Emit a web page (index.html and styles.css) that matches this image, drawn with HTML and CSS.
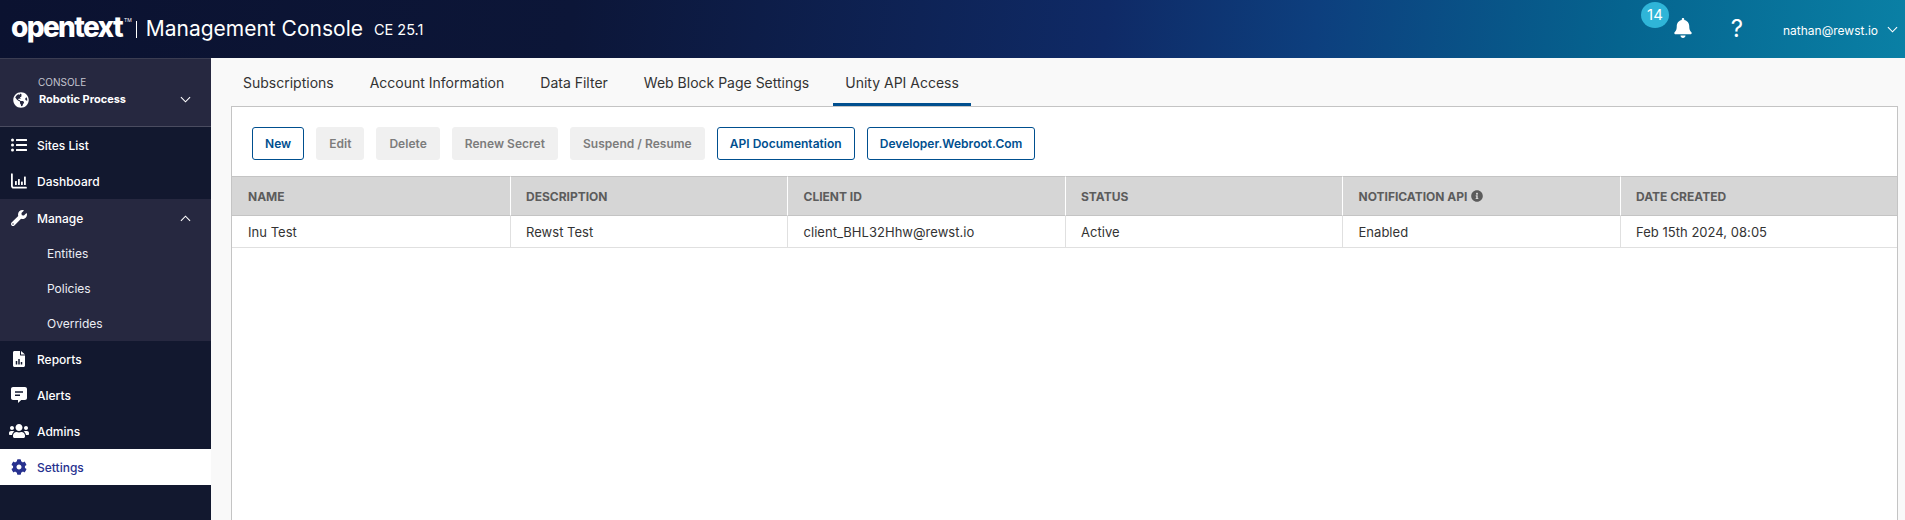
FILE: index.html
```html
<!DOCTYPE html>
<html lang="en">
<head>
  <meta charset="UTF-8" />
  <meta name="viewport" content="width=device-width, initial-scale=1.0"/>
  <title>Management Console</title>
  <link rel="stylesheet" href="styles.css">
</head>
<body>
  <header class="topbar">
    <div class="brand">
      <span class="logo">opentext<sup>TM</sup></span>
      <span class="brand-line"></span>
      <span class="product">Management Console</span>
      <span class="version">CE 25.1</span>
    </div>
    <div class="top-actions">
      <div class="bell">
        <span class="badge">14</span>
        <svg class="bell-icon" viewBox="0 0 448 512"><path d="M224 512c35.32 0 63.97-28.65 63.97-64H160.03c0 35.35 28.65 64 63.97 64zm215.39-149.71c-19.32-20.76-55.47-51.99-55.47-154.29 0-77.7-54.48-139.9-127.94-155.16V32c0-17.67-14.32-32-31.98-32s-31.98 14.33-31.98 32v20.84C118.56 68.1 64.08 130.3 64.08 208c0 102.3-36.15 133.53-55.47 154.29-6 6.45-8.66 14.16-8.61 21.71.11 16.4 12.98 32 32.1 32h383.8c19.12 0 32-15.6 32.1-32 .05-7.55-2.61-15.27-8.61-21.71z"/></svg>
      </div>
      <span class="help">?</span>
      <span class="user">nathan@rewst.io</span>
      <svg class="chev user-chev" viewBox="0 0 12 7"><path d="M1 1l5 5 5-5"/></svg>
    </div>
  </header>

  <div class="layout">
    <nav class="sidebar">
      <div class="console-box">
        <svg class="globe" viewBox="0 0 496 512"><path d="M248 8C111.03 8 0 119.03 0 256s111.03 248 248 248 248-111.03 248-248S384.97 8 248 8zm82.29 357.6c-3.9 3.88-7.99 7.95-11.31 11.28-2.99 3-5.1 6.7-6.17 10.71-1.51 5.66-2.73 11.38-4.77 16.87l-17.39 46.85c-13.76 3-28 4.69-42.65 4.69v-27.38c1.69-12.62-7.64-36.26-22.63-51.25-6-6-9.37-14.14-9.37-22.63v-32.01c0-11.64-6.27-22.34-16.46-27.97-14.37-7.95-34.81-19.06-48.81-26.11-11.48-5.78-22.1-13.14-31.65-21.75l-.8-.72a114.792 114.792 0 0 1-18.06-20.74c-9.38-13.77-24.66-36.42-34.59-51.14 20.47-45.5 57.36-82.04 103.2-101.89l24.01 12.01C203.48 89.74 216 82.01 216 70.11v-11.3c7.99-1.29 16.12-2.11 24.39-2.42l28.3 28.3c6.25 6.25 6.25 16.38 0 22.63L264 112l-10.34 10.34c-3.12 3.12-3.12 8.19 0 11.31l4.69 4.69c3.12 3.12 3.12 8.19 0 11.31l-8 8a8.008 8.008 0 0 1-5.66 2.34h-8.99c-2.08 0-4.08.81-5.58 2.27l-9.92 9.65a8.008 8.008 0 0 0-1.58 9.31l15.59 31.19c2.66 5.32-1.21 11.58-7.15 11.58h-5.64c-1.93 0-3.79-.7-5.24-1.96l-9.28-8.06a16.017 16.017 0 0 0-15.55-3.1l-31.17 10.39a11.95 11.95 0 0 0-8.17 11.34c0 4.53 2.56 8.66 6.61 10.69l11.08 5.54c9.41 4.71 19.79 7.16 30.31 7.16s22.59 27.29 32 32h66.75c8.49 0 16.62 3.37 22.63 9.37l13.69 13.69a30.503 30.503 0 0 1 8.93 21.57 46.536 46.536 0 0 1-13.72 32.98zM417 274.25c-5.79-1.45-10.84-5-14.15-9.97l-17.98-26.97a23.97 23.97 0 0 1 0-26.62l19.59-29.38c2.32-3.47 5.5-6.28 9.24-8.15l12.98-6.49C440.2 193.59 448 223.87 448 256c0 8.67-.74 17.16-1.82 25.54L417 274.25z"/></svg>
        <div class="console-text">
          <span class="console-label">CONSOLE</span>
          <span class="console-name">Robotic Process</span>
        </div>
        <svg class="chev" viewBox="0 0 12 7"><path d="M1 1l5 5 5-5"/></svg>
      </div>

      <a class="nav-item">
        <svg class="nav-icon" viewBox="0 0 512 512"><path d="M48 48a48 48 0 1 0 48 48 48 48 0 0 0-48-48zm0 160a48 48 0 1 0 48 48 48 48 0 0 0-48-48zm0 160a48 48 0 1 0 48 48 48 48 0 0 0-48-48zm448 16H176a16 16 0 0 0-16 16v32a16 16 0 0 0 16 16h320a16 16 0 0 0 16-16v-32a16 16 0 0 0-16-16zm0-320H176a16 16 0 0 0-16 16v32a16 16 0 0 0 16 16h320a16 16 0 0 0 16-16V80a16 16 0 0 0-16-16zm0 160H176a16 16 0 0 0-16 16v32a16 16 0 0 0 16 16h320a16 16 0 0 0 16-16v-32a16 16 0 0 0-16-16z"/></svg>
        Sites List
      </a>
      <a class="nav-item">
        <svg class="nav-icon" viewBox="0 0 16 16"><path d="M0 1.2C0 .7.4.3.9.3s.9.4.9.9v11.6c0 .6.4 1 1 1H15c.5 0 .9.4.9.9s-.4.9-.9.9H2.6C1.1 15.6 0 14.500 0 13z"/><rect x="4" y="8" width="1.800" height="4" rx=".5"/><rect x="7" y="6" width="1.800" height="6" rx=".5"/><rect x="10" y="8.500" width="1.800" height="3.500" rx=".5"/><rect x="13" y="3.500" width="1.800" height="8.500" rx=".5"/></svg>
        Dashboard
      </a>

      <div class="nav-group">
        <a class="nav-item">
          <svg class="nav-icon" viewBox="0 0 512 512"><path d="M507.73 109.1c-2.24-9.03-13.54-12.09-20.12-5.51l-74.36 74.36-67.88-11.31-11.31-67.88 74.36-74.36c6.62-6.62 3.43-17.9-5.66-20.16-47.38-11.74-99.55.91-136.58 37.93-39.64 39.64-50.55 97.1-34.05 147.2L18.74 402.76c-24.99 24.99-24.99 65.51 0 90.5 24.99 24.99 65.51 24.99 90.5 0l213.21-213.21c50.12 16.71 107.47 5.68 147.37-34.22 37.07-37.07 49.7-89.32 37.91-136.73zM64 472c-13.25 0-24-10.75-24-24 0-13.26 10.75-24 24-24s24 10.74 24 24c0 13.25-10.75 24-24 24z"/></svg>
          Manage
          <svg class="chev chev-up" viewBox="0 0 12 7"><path d="M1 6l5-5 5 5"/></svg>
        </a>
        <a class="sub-item">Entities</a>
        <a class="sub-item">Policies</a>
        <a class="sub-item">Overrides</a>
      </div>

      <a class="nav-item">
        <svg class="nav-icon" viewBox="0 0 384 512"><path fill-rule="evenodd" d="M224 0v128c0 9 7 16 16 16h144v320c0 27-21 48-48 48H48c-27 0-48-21-48-48V48C0 21 21 0 48 0zM256 0l128 112H256zM88 320h48v112H88zM168 256h48v176h-48zM248 352h48v80h-48z"/></svg>
        Reports
      </a>
      <a class="nav-item">
        <svg class="nav-icon" viewBox="0 0 16 16"><path fill-rule="evenodd" d="M2 0h12c1.100 0 2 .9 2 2v9c0 1.100-.9 2-2 2h-3.800L7 16v-3H2c-1.100 0-2-.9-2-2V2C0 .9.900 0 2 0zm2 4.200v1.600h8V4.200zm0 3.200V9h5V7.400z"/></svg>
        Alerts
      </a>
      <a class="nav-item">
        <svg class="nav-icon nav-icon-wide" viewBox="0 0 640 512"><path d="M96 224c35.3 0 64-28.7 64-64s-28.7-64-64-64-64 28.7-64 64 28.7 64 64 64zm448 0c35.3 0 64-28.7 64-64s-28.7-64-64-64-64 28.7-64 64 28.7 64 64 64zm32 32h-64c-17.6 0-33.5 7.1-45.1 18.6 40.3 22.1 68.9 62 75.1 109.4h66c17.7 0 32-14.3 32-32v-32c0-35.3-28.7-64-64-64zm-256 0c61.9 0 112-50.1 112-112S381.9 32 320 32 208 82.1 208 144s50.1 112 112 112zm76.8 32h-8.3c-20.8 10-43.9 16-68.5 16s-47.6-6-68.5-16h-8.3C179.6 288 128 339.6 128 403.2V432c0 26.5 21.5 48 48 48h288c26.5 0 48-21.5 48-48v-28.8c0-63.6-51.6-115.2-115.2-115.2zm-223.7-13.4C161.5 263.1 145.6 256 128 256H64c-35.3 0-64 28.7-64 64v32c0 17.7 14.3 32 32 32h65.9c6.3-47.4 34.9-87.3 75.2-109.4z"/></svg>
        Admins
      </a>
      <a class="nav-item active">
        <svg class="nav-icon" viewBox="0 0 512 512"><path d="M487.4 315.7l-42.6-24.6c4.3-23.2 4.3-47 0-70.2l42.6-24.6c4.9-2.8 7.1-8.6 5.5-14-11.1-35.6-30-67.8-54.7-94.6-3.8-4.1-10-5.1-14.8-2.3L380.8 110c-17.9-15.4-38.5-27.3-60.8-35.1V25.8c0-5.6-3.9-10.5-9.4-11.7-36.7-8.2-74.3-7.8-109.2 0-5.5 1.2-9.4 6.1-9.4 11.7V75c-22.2 7.9-42.8 19.8-60.8 35.1L88.7 85.5c-4.9-2.8-11-1.9-14.8 2.3-24.7 26.7-43.6 58.9-54.7 94.6-1.7 5.4.6 11.2 5.5 14L67.3 221c-4.3 23.2-4.3 47 0 70.2l-42.6 24.6c-4.9 2.8-7.1 8.6-5.5 14 11.1 35.6 30 67.8 54.7 94.6 3.8 4.1 10 5.1 14.8 2.3l42.6-24.6c17.9 15.4 38.5 27.3 60.8 35.1v49.2c0 5.6 3.9 10.5 9.4 11.7 36.7 8.2 74.3 7.8 109.2 0 5.5-1.2 9.4-6.1 9.4-11.7v-49.2c22.2-7.9 42.8-19.8 60.8-35.1l42.6 24.6c4.9 2.8 11 1.9 14.8-2.3 24.7-26.7 43.6-58.9 54.7-94.6 1.5-5.5-.7-11.3-5.6-14.1zM256 336c-44.1 0-80-35.9-80-80s35.9-80 80-80 80 35.9 80 80-35.9 80-80 80z"/></svg>
        Settings
      </a>
    </nav>

    <main class="content">
      <div class="tabs">
        <a class="tab">Subscriptions</a>
        <a class="tab">Account Information</a>
        <a class="tab">Data Filter</a>
        <a class="tab">Web Block Page Settings</a>
        <a class="tab tab-active">Unity API Access</a>
      </div>

      <section class="panel">
        <div class="toolbar">
          <button class="btn">New</button>
          <button class="btn btn-off">Edit</button>
          <button class="btn btn-off">Delete</button>
          <button class="btn btn-off">Renew Secret</button>
          <button class="btn btn-off">Suspend / Resume</button>
          <button class="btn">API Documentation</button>
          <button class="btn">Developer.Webroot.Com</button>
        </div>

        <div class="table">
          <div class="th">NAME</div>
          <div class="th">DESCRIPTION</div>
          <div class="th">CLIENT ID</div>
          <div class="th">STATUS</div>
          <div class="th">NOTIFICATION API
            <svg class="info" viewBox="0 0 512 512"><path d="M256 8C119.043 8 8 119.083 8 256c0 136.997 111.043 248 248 248s248-111.003 248-248C504 119.083 392.957 8 256 8zm0 110c23.196 0 42 18.804 42 42s-18.804 42-42 42-42-18.804-42-42 18.804-42 42-42zm56 254c0 6.627-5.373 12-12 12h-88c-6.627 0-12-5.373-12-12v-24c0-6.627 5.373-12 12-12h12v-64h-12c-6.627 0-12-5.373-12-12v-24c0-6.627 5.373-12 12-12h64c6.627 0 12 5.373 12 12v100h12c6.627 0 12 5.373 12 12v24z"/></svg>
          </div>
          <div class="th">DATE CREATED</div>

          <div class="td">Inu Test</div>
          <div class="td">Rewst Test</div>
          <div class="td">client_BHL32Hhw@rewst.io</div>
          <div class="td">Active</div>
          <div class="td">Enabled</div>
          <div class="td">Feb 15th 2024, 08:05</div>
        </div>
      </section>
    </main>
  </div>
</body>
</html>
```

FILE: styles.css
```css
* {
  box-sizing: border-box;
}
html, body {
  height: 100%;
}
body {
  margin: 0;
  overflow: hidden;
  font-family: "Inter", "Liberation Sans", sans-serif;
  background: #f9f9f9;
  color: #333;
}

/* top bar */
.topbar {
  height: 58px;
  display: flex;
  align-items: center;
  justify-content: space-between;
  padding-left: 11px;
  color: #fff;
  background: linear-gradient(97deg, #0b1230 0%, #0c1638 30%, #0f2a66 58%, #0d3f7e 69%, #05648f 85%, #0a80a5 100%);
}
.brand {
  display: flex;
  align-items: center;
}
.logo {
  font-size: 28px;
  font-weight: 800;
  letter-spacing: -1.650px;
  line-height: 1;
  margin-top: -4px;
}
.logo sup {
  font-size: 5px;
  font-weight: 400;
  letter-spacing: 0;
  vertical-align: 15px;
  line-height: 0;
  margin-left: 2px;
}
.brand-line {
  width: 1px;
  height: 17px;
  background: #fff;
  margin: 0 9px 0 4px;
}
.product {
  font-size: 21px;
  margin-top: -2px;
}
.version {
  font-size: 14.500px;
  margin-left: 11px;
  margin-top: 1px;
}
.top-actions {
  display: flex;
  align-items: center;
  padding-right: 7px;
}
.bell {
  position: relative;
  width: 18px;
  height: 20px;
  margin-right: 38px;
  margin-bottom: 2px;
}
.bell-icon {
  display: block;
  width: 18px;
  height: 20px;
  fill: #fff;
}
.badge {
  position: absolute;
  left: -33px;
  top: -16px;
  width: 28px;
  height: 26px;
  border-radius: 50%;
  background: #2fb5d8;
  font-size: 15px;
  line-height: 26px;
  text-align: center;
}
.help {
  font-size: 24px;
  width: 14px;
  margin-right: 39px;
  margin-bottom: 2px;
  text-align: center;
}
.user {
  font-size: 12px;
  margin-right: 9px;
  margin-top: 2px;
}
.chev {
  width: 11px;
  height: 7px;
  fill: none;
  stroke: #fff;
  stroke-width: 1.2;
  flex: none;
}

/* sidebar */
.layout {
  display: flex;
  height: 462px;
}
.sidebar {
  width: 211px;
  flex: none;
  background: #12182f;
  color: #fff;
  font-size: 12px;
}
.console-box {
  height: 69px;
  display: flex;
  align-items: center;
  padding: 0 20px 0 13px;
  background: #262840;
  border-top: 1px solid #3b3d52;
  border-bottom: 1px solid #4a4c60;
}
.globe {
  width: 16px;
  height: 16px;
  fill: #fff;
  margin-top: 14px;
  flex: none;
}
.console-text {
  margin-left: 10px;
  margin-top: -3px;
  flex: 1;
  display: flex;
  flex-direction: column;
  gap: 7px;
}
.console-label {
  font-size: 10px;
  color: #c4c5cf;
  line-height: 10px;
  margin-left: -1px;
}
.console-name {
  font-size: 11px;
  font-weight: 700;
  line-height: 11px;
}
.console-box .chev {
  margin-top: 14px;
}
.nav-item {
  height: 36px;
  display: flex;
  align-items: center;
  padding: 0 20px 0 11px;
  font-weight: 500;
}
.nav-icon {
  width: 16px;
  height: 16px;
  fill: #fff;
  flex: none;
  margin-right: 10px;
}
.nav-icon-wide {
  width: 20px;
  margin-left: -2px;
  margin-right: 8px;
}
.chev-up {
  margin-left: auto;
}
.nav-group {
  background: #262840;
}
.nav-group .nav-item {
  height: 37px;
  padding-top: 1px;
}
.sub-item {
  height: 35px;
  display: flex;
  align-items: center;
  padding-left: 47px;
  color: #eceef4;
  font-size: 12px;
}
.nav-item.active {
  background: #fff;
  color: #27318f;
}
.nav-item.active .nav-icon {
  fill: #27318f;
}

/* main area */
.content {
  flex: 1;
  min-width: 0;
  padding: 0 7px 0 20px;
}
.tabs {
  height: 48px;
  display: flex;
  gap: 12px;
}
.tab {
  height: 48px;
  padding: 16px 12px 0;
  font-size: 14px;
  line-height: 18px;
  color: #333;
}
.tab-active {
  border-bottom: 3px solid #004f8f;
}
.panel {
  height: 420px;
  background: #fff;
  border: 1px solid #c4c4c4;
  border-bottom: 0;
}
.toolbar {
  display: flex;
  gap: 12px;
  padding: 20px 20px 16px;
}
.btn {
  height: 33px;
  padding: 0 12px;
  font-family: inherit;
  font-size: 12px;
  font-weight: 600;
  letter-spacing: 0.025px;
  color: #004f8f;
  background: #fff;
  border: 1px solid #004f8f;
  border-radius: 3px;
}
.btn-off {
  color: #7c7c7c;
  background: #f0f0f0;
  border-color: #f0f0f0;
}

/* table */
.table {
  display: grid;
  grid-template-columns: repeat(6, 1fr);
}
.th {
  height: 40px;
  display: flex;
  align-items: center;
  gap: 4px;
  padding-left: 15.500px;
  font-size: 12px;
  font-weight: 700;
  color: #5c5c5c;
  background: #d6d6d6;
  border-top: 1px solid #c4c4c4;
  border-bottom: 1px solid #c4c4c4;
  border-left: 1px solid #fff;
}
.th:first-child {
  border-left: 0;
  padding-left: 16px;
}
.td {
  height: 32px;
  display: flex;
  align-items: center;
  padding-left: 15.500px;
  font-size: 13px;
  letter-spacing: 0.03px;
  color: #333;
  border-bottom: 1px solid #e0e0e0;
  border-left: 1px solid #e0e0e0;
}
.td:nth-child(7) {
  border-left: 0;
  padding-left: 16px;
}
.info {
  width: 12px;
  height: 12px;
  fill: #5c5c5c;
}
```
